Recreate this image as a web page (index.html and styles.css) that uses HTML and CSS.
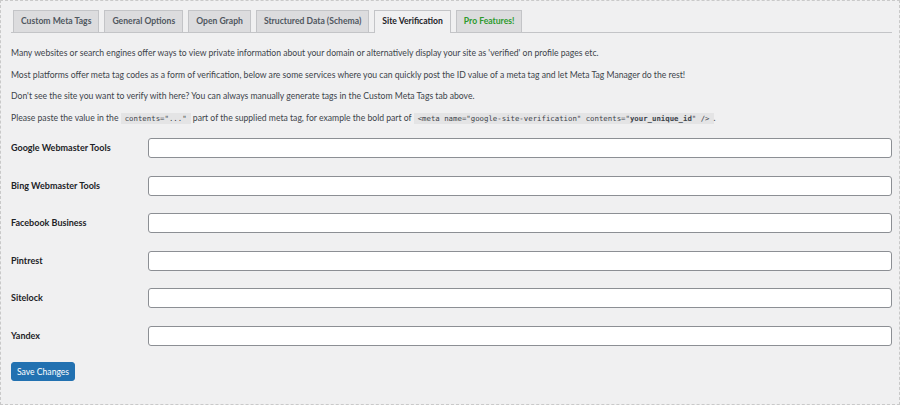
FILE: index.html
```html
<!DOCTYPE html>
<html>
<head>
<meta charset="utf-8">
<title>Meta Tag Manager - Site Verification</title>
<link rel="stylesheet" href="styles.css">
</head>
<body>
<div class="wrap">
    <div class="nav-tabs">
        <a class="tab" href="#">Custom Meta Tags</a>
        <a class="tab" href="#">General Options</a>
        <a class="tab" href="#">Open Graph</a>
        <a class="tab" href="#">Structured Data (Schema)</a>
        <a class="tab active" href="#">Site Verification</a>
        <a class="tab pro" href="#">Pro Features!</a>
    </div>

    <div class="intro">
        <p>Many websites or search engines offer ways to view private information about your domain or alternatively display your site as 'verified' on profile pages etc.</p>
        <p>Most platforms offer meta tag codes as a form of verification, below are some services where you can quickly post the ID value of a meta tag and let Meta Tag Manager do the rest!</p>
        <p>Don't see the site you want to verify with here? You can always manually generate tags in the Custom Meta Tags tab above.</p>
        <p>Please paste the value in the <code>contents="..."</code> part of the supplied meta tag, for example the bold part of <code>&lt;meta name="google-site-verification" contents="<b>your_unique_id</b>" /&gt;</code>.</p>
    </div>

    <form class="verify-form">
        <div class="row"><label>Google Webmaster Tools</label><input type="text"></div>
        <div class="row"><label>Bing Webmaster Tools</label><input type="text"></div>
        <div class="row"><label>Facebook Business</label><input type="text"></div>
        <div class="row"><label>Pintrest</label><input type="text"></div>
        <div class="row"><label>Sitelock</label><input type="text"></div>
        <div class="row"><label>Yandex</label><input type="text"></div>
        <div class="submit"><button type="button">Save Changes</button></div>
    </form>
</div>
</body>
</html>
```

FILE: styles.css
```css
html,body,div,p,form{margin:0;padding:0;}
body{background:#f0f0f1;color:#3c434a;font:8.65px/14px Lato,"Open Sans",sans-serif;}
.wrap{box-sizing:border-box;height:405px;border:1px dashed #c9c9c9;padding:9px 7px 0 10px;}

.nav-tabs{display:flex;gap:5px;padding-left:2px;border-bottom:1px solid #c3c4c7;height:22px;}
.nav-tabs .tab{display:block;height:21px;line-height:21px;padding:0 7px;background:#dcdcde;border:1px solid #c3c4c7;border-bottom:0;color:#50575e;font-size:8.6px;font-weight:700;text-decoration:none;}
.nav-tabs .tab.active{background:#f0f0f1;color:#1d2327;height:22px;margin-bottom:-1px;}
.nav-tabs .tab.pro{color:#2c9a2c;}

.intro{display:flex;flex-direction:column;gap:7.7px;margin-top:13px;}
.intro code{font:7.35px/13px "DejaVu Sans Mono",monospace;background:#e4e4e5;padding:1px 4px;color:#3c434a;}
.intro code b{font-weight:700;}

.verify-form{display:flex;flex-direction:column;gap:17.6px;margin-top:13px;}
.row{display:flex;align-items:center;height:20px;}
.row label{width:137px;color:#1d2327;font-size:9px;font-weight:700;}
.row input{flex:1;box-sizing:border-box;height:20px;margin:0;border:1px solid #8c8f94;border-radius:3px;background:#fff;}
.submit{margin-top:-1.5px;}
.submit button{height:19px;padding:0 5px;border:1px solid #2271b1;border-radius:3px;background:#2271b1;color:#fff;font:8.6px Lato,"Open Sans",sans-serif;}
```
